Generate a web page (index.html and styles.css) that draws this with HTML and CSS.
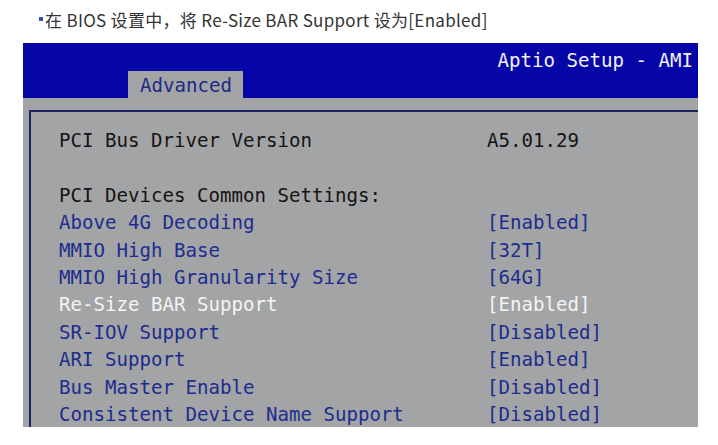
FILE: index.html
```html
<!DOCTYPE html>
<html>
<head>
    <meta charset="utf-8">
    <title>Re-Size BAR</title>
    <link rel="stylesheet" href="styles.css">
</head>
<body>
    <p class="caption"><span class="dot"></span>在 BIOS 设置中，将 Re-Size BAR Support 设为[Enabled]</p>

    <div class="bios">
        <div class="bios-head">
            <div class="bios-title">Aptio Setup - AMI</div>
            <div class="tab">Advanced</div>
        </div>

        <div class="frame">
            <div class="row"><span class="label">PCI Bus Driver Version</span><span class="value">A5.01.29</span></div>
            <div class="row"></div>
            <div class="row"><span class="label">PCI Devices Common Settings:</span></div>
            <div class="row opt"><span class="label">Above 4G Decoding</span><span class="value">[Enabled]</span></div>
            <div class="row opt"><span class="label">MMIO High Base</span><span class="value">[32T]</span></div>
            <div class="row opt"><span class="label">MMIO High Granularity Size</span><span class="value">[64G]</span></div>
            <div class="row opt selected"><span class="label">Re-Size BAR Support</span><span class="value">[Enabled]</span></div>
            <div class="row opt"><span class="label">SR-IOV Support</span><span class="value">[Disabled]</span></div>
            <div class="row opt"><span class="label">ARI Support</span><span class="value">[Enabled]</span></div>
            <div class="row opt"><span class="label">Bus Master Enable</span><span class="value">[Disabled]</span></div>
            <div class="row opt"><span class="label">Consistent Device Name Support</span><span class="value">[Disabled]</span></div>
        </div>
    </div>
</body>
</html>
```

FILE: styles.css
```css
body {
    margin: 0;
    background-color: white;
}

.caption {
    margin: 0;
    padding: 9px 0 0 38px;
    height: 43px;
    box-sizing: border-box;
    font-family: "Microsoft YaHei", "Noto Sans CJK SC", sans-serif;
    font-size: 17px;
    letter-spacing: 0.3px;
    line-height: 22px;
    color: #333;
}

.dot {
    display: inline-block;
    width: 4px;
    height: 4px;
    margin: 0 2px 6px 1px;
    vertical-align: middle;
    background-color: #2f4fa8;
}

/* screen capture of the setup utility */
.bios {
    margin-left: 23px;
    width: 675px;
    height: 384px;
    overflow: hidden;
    background-color: #a3a4a6;
    font-family: "DejaVu Sans Mono", monospace;
    font-size: 19.1px;
}

.bios-head {
    height: 55px;
    background-color: #0606a8;
}

.bios-title {
    padding: 8px 5px 0 0;
    line-height: 20px;
    text-align: right;
    color: #f2f2f2;
}

.tab {
    margin-left: 105px;
    width: 103px;
    height: 27px;
    padding: 1px 0 0 12px;
    line-height: 27px;
    background-color: #a3a4a6;
    color: #1d2a86;
}

.frame {
    margin: 12px 0 0 6px;
    padding: 15px 0 0 28px;
    border-top: 2px solid #1e2462;
    border-left: 2px solid #1e2462;
    height: 400px;
}

.row {
    display: flex;
    height: 27.4px;
    line-height: 27.4px;
    color: #141414;
    white-space: pre;
}

.label {
    width: 428px;
}

.opt {
    color: #1d2c8e;
}

.selected {
    color: #f4f4f4;
}
```
